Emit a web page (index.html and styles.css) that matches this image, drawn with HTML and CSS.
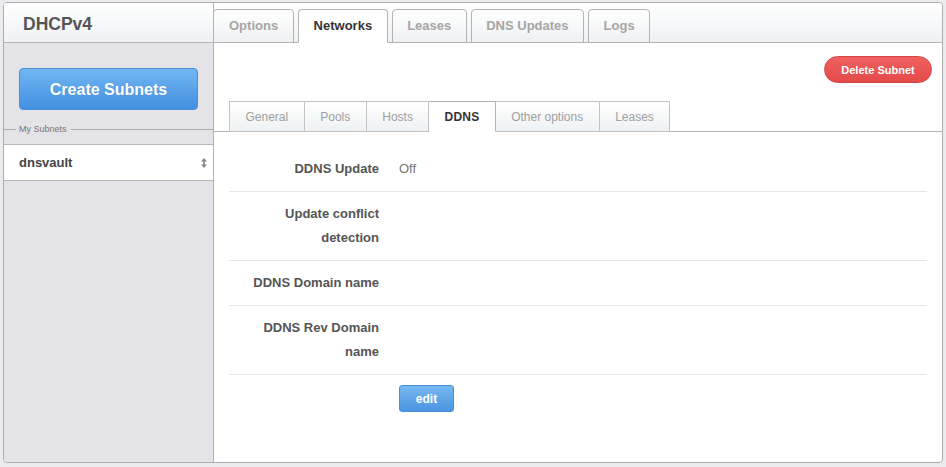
FILE: index.html
```html
<!DOCTYPE html>
<html lang="en">
<head>
  <meta charset="UTF-8">
  <meta name="viewport" content="width=device-width, initial-scale=1.0">
  <title>DHCPv4</title>
  <link rel="stylesheet" href="styles.css">
</head>
<body>

<div class="frame">
  <div class="sidebar">
    <div class="sidebar-head">DHCPv4</div>
    <div class="sidebar-body">
      <button class="create-btn">Create Subnets</button>
    </div>
    <div class="legend"><span>My Subnets</span></div>
    <div class="subnet-item">
      <span>dnsvault</span>
      <svg class="sort-icon" width="6" height="10" viewBox="0 0 6 10">
        <path d="M3 0 L6 3.5 L3.8 3.5 L3.8 6.5 L6 6.5 L3 10 L0 6.5 L2.2 6.5 L2.2 3.5 L0 3.5 Z" fill="#8a8a8a"/>
      </svg>
    </div>
  </div>

  <div class="main">
    <div class="tabbar">
      <div class="tab">Options</div>
      <div class="tab active">Networks</div>
      <div class="tab">Leases</div>
      <div class="tab">DNS Updates</div>
      <div class="tab">Logs</div>
    </div>

    <div class="actions">
      <button class="delete-btn">Delete Subnet</button>
    </div>

    <div class="subtabs">
      <div class="subtab">General</div>
      <div class="subtab">Pools</div>
      <div class="subtab">Hosts</div>
      <div class="subtab active">DDNS</div>
      <div class="subtab">Other options</div>
      <div class="subtab">Leases</div>
    </div>

    <div class="details">
      <div class="row">
        <div class="label">DDNS Update</div>
        <div class="value">Off</div>
      </div>
      <div class="row">
        <div class="label">Update conflict detection</div>
        <div class="value"></div>
      </div>
      <div class="row">
        <div class="label">DDNS Domain name</div>
        <div class="value"></div>
      </div>
      <div class="row">
        <div class="label">DDNS Rev Domain name</div>
        <div class="value"></div>
      </div>
      <div class="edit-row">
        <button class="edit-btn">edit</button>
      </div>
    </div>
  </div>
</div>

</body>
</html>
```

FILE: styles.css
```css
body {
  font-family: "Liberation Sans", Arial, sans-serif;
  background-color: #ebebef;
  color: #555;
  margin: 0;
  padding: 2px 0 0 3px;
}
button {
  font-family: "Liberation Sans", Arial, sans-serif;
  cursor: pointer;
}
.frame {
  display: flex;
  width: 938px;
  height: 459px;
  border: 1px solid #adadad;
  border-radius: 4px;
  background-color: #fff;
  overflow: hidden;
}
.sidebar {
  width: 209px;
  border-right: 1px solid #b3b3b3;
  background-color: #e3e3e8;
  display: flex;
  flex-direction: column;
}
.sidebar-head {
  height: 39px;
  border-bottom: 1px solid #b3b3b3;
  background: linear-gradient(#ffffff, #eef1f3);
  padding-left: 19px;
  font-size: 17.5px;
  font-weight: bold;
  color: #555;
  line-height: 42px;
}
.sidebar-body {
  padding: 25px 15px 0 15px;
}
.create-btn {
  width: 179px;
  height: 42px;
  border: 1px solid #4a8fd6;
  border-radius: 4px;
  background: linear-gradient(#72b6f3, #4290e0);
  color: #fff;
  font-size: 16px;
  font-weight: bold;
  text-shadow: 0 0 1px rgba(0, 0, 0, 0.2);
  padding: 1px 0 0 0;
}
.legend {
  display: flex;
  align-items: center;
  height: 12px;
  margin-top: 13px;
}
.legend::before {
  content: "";
  width: 12px;
  border-top: 1px solid #aaa;
}
.legend::after {
  content: "";
  flex: 1;
  border-top: 1px solid #aaa;
}
.legend span {
  font-size: 9px;
  color: #777;
  padding: 0 4px 0 3px;
}
.subnet-item {
  margin-top: 9px;
  height: 35px;
  border-top: 1px solid #b8b8b8;
  border-bottom: 1px solid #b8b8b8;
  background-color: #fff;
  display: flex;
  align-items: center;
  justify-content: space-between;
  padding: 0 6px 0 15px;
  font-size: 13px;
  font-weight: bold;
  color: #444;
}
.sort-icon {
  display: block;
}
.main {
  flex: 1;
  display: flex;
  flex-direction: column;
}
.tabbar {
  display: flex;
  align-items: flex-end;
  gap: 4px;
  height: 39px;
  border-bottom: 1px solid #b3b3b3;
  background: linear-gradient(#ffffff, #eef1f3);
}
.tab {
  height: 32px;
  margin-bottom: -1px;
  padding: 0 14.5px;
  border: 1px solid #b3b3b3;
  border-radius: 4px 4px 0 0;
  background: linear-gradient(#ffffff, #eef1f3);
  font-size: 13px;
  font-weight: bold;
  color: #a6a6a6;
  line-height: 32px;
}
.tab:first-child {
  margin-left: -1px;
  padding: 0 15px;
}
.tab.active {
  background: #fff;
  border-bottom-color: #fff;
  color: #333;
}
.actions {
  display: flex;
  justify-content: flex-end;
  padding: 13px 10px 0 0;
}
.delete-btn {
  width: 108px;
  height: 27px;
  border: 1px solid #d44646;
  border-radius: 14px;
  background: linear-gradient(#f06060, #e44a4a);
  color: #fff;
  font-size: 11px;
  font-weight: bold;
  padding: 0;
}
.subtabs {
  display: flex;
  margin-top: 18px;
  padding-left: 15px;
  border-bottom: 1px solid #b3b3b3;
}
.subtab {
  height: 29px;
  margin-bottom: -1px;
  padding: 0 15.5px;
  border: 1px solid #c3c3c3;
  border-left: none;
  background: linear-gradient(#ffffff, #eef1f3);
  font-size: 12px;
  color: #a0a0a0;
  line-height: 30px;
}
.subtab:first-child {
  border-left: 1px solid #c3c3c3;
}
.subtab.active {
  background: #fff;
  border-color: #b3b3b3;
  border-bottom-color: #fff;
  font-weight: bold;
  color: #333;
  letter-spacing: 0.3px;
  padding: 0 15px;
}
.details {
  padding: 15px 15px 0 15px;
}
.row {
  display: flex;
  gap: 20px;
  padding: 10px 0;
  border-bottom: 1px solid #e6e6e6;
  line-height: 24px;
  font-size: 13px;
}
.label {
  width: 150px;
  text-align: right;
  font-weight: bold;
  color: #555;
}
.value {
  color: #777;
}
.edit-row {
  padding: 10px 0 0 170px;
}
.edit-btn {
  width: 55px;
  height: 27px;
  border: 1px solid #4a8fd6;
  border-radius: 3px;
  background: linear-gradient(#76b8f2, #4a94e0);
  color: #fff;
  font-size: 12px;
  font-weight: bold;
  padding: 0;
}
```
